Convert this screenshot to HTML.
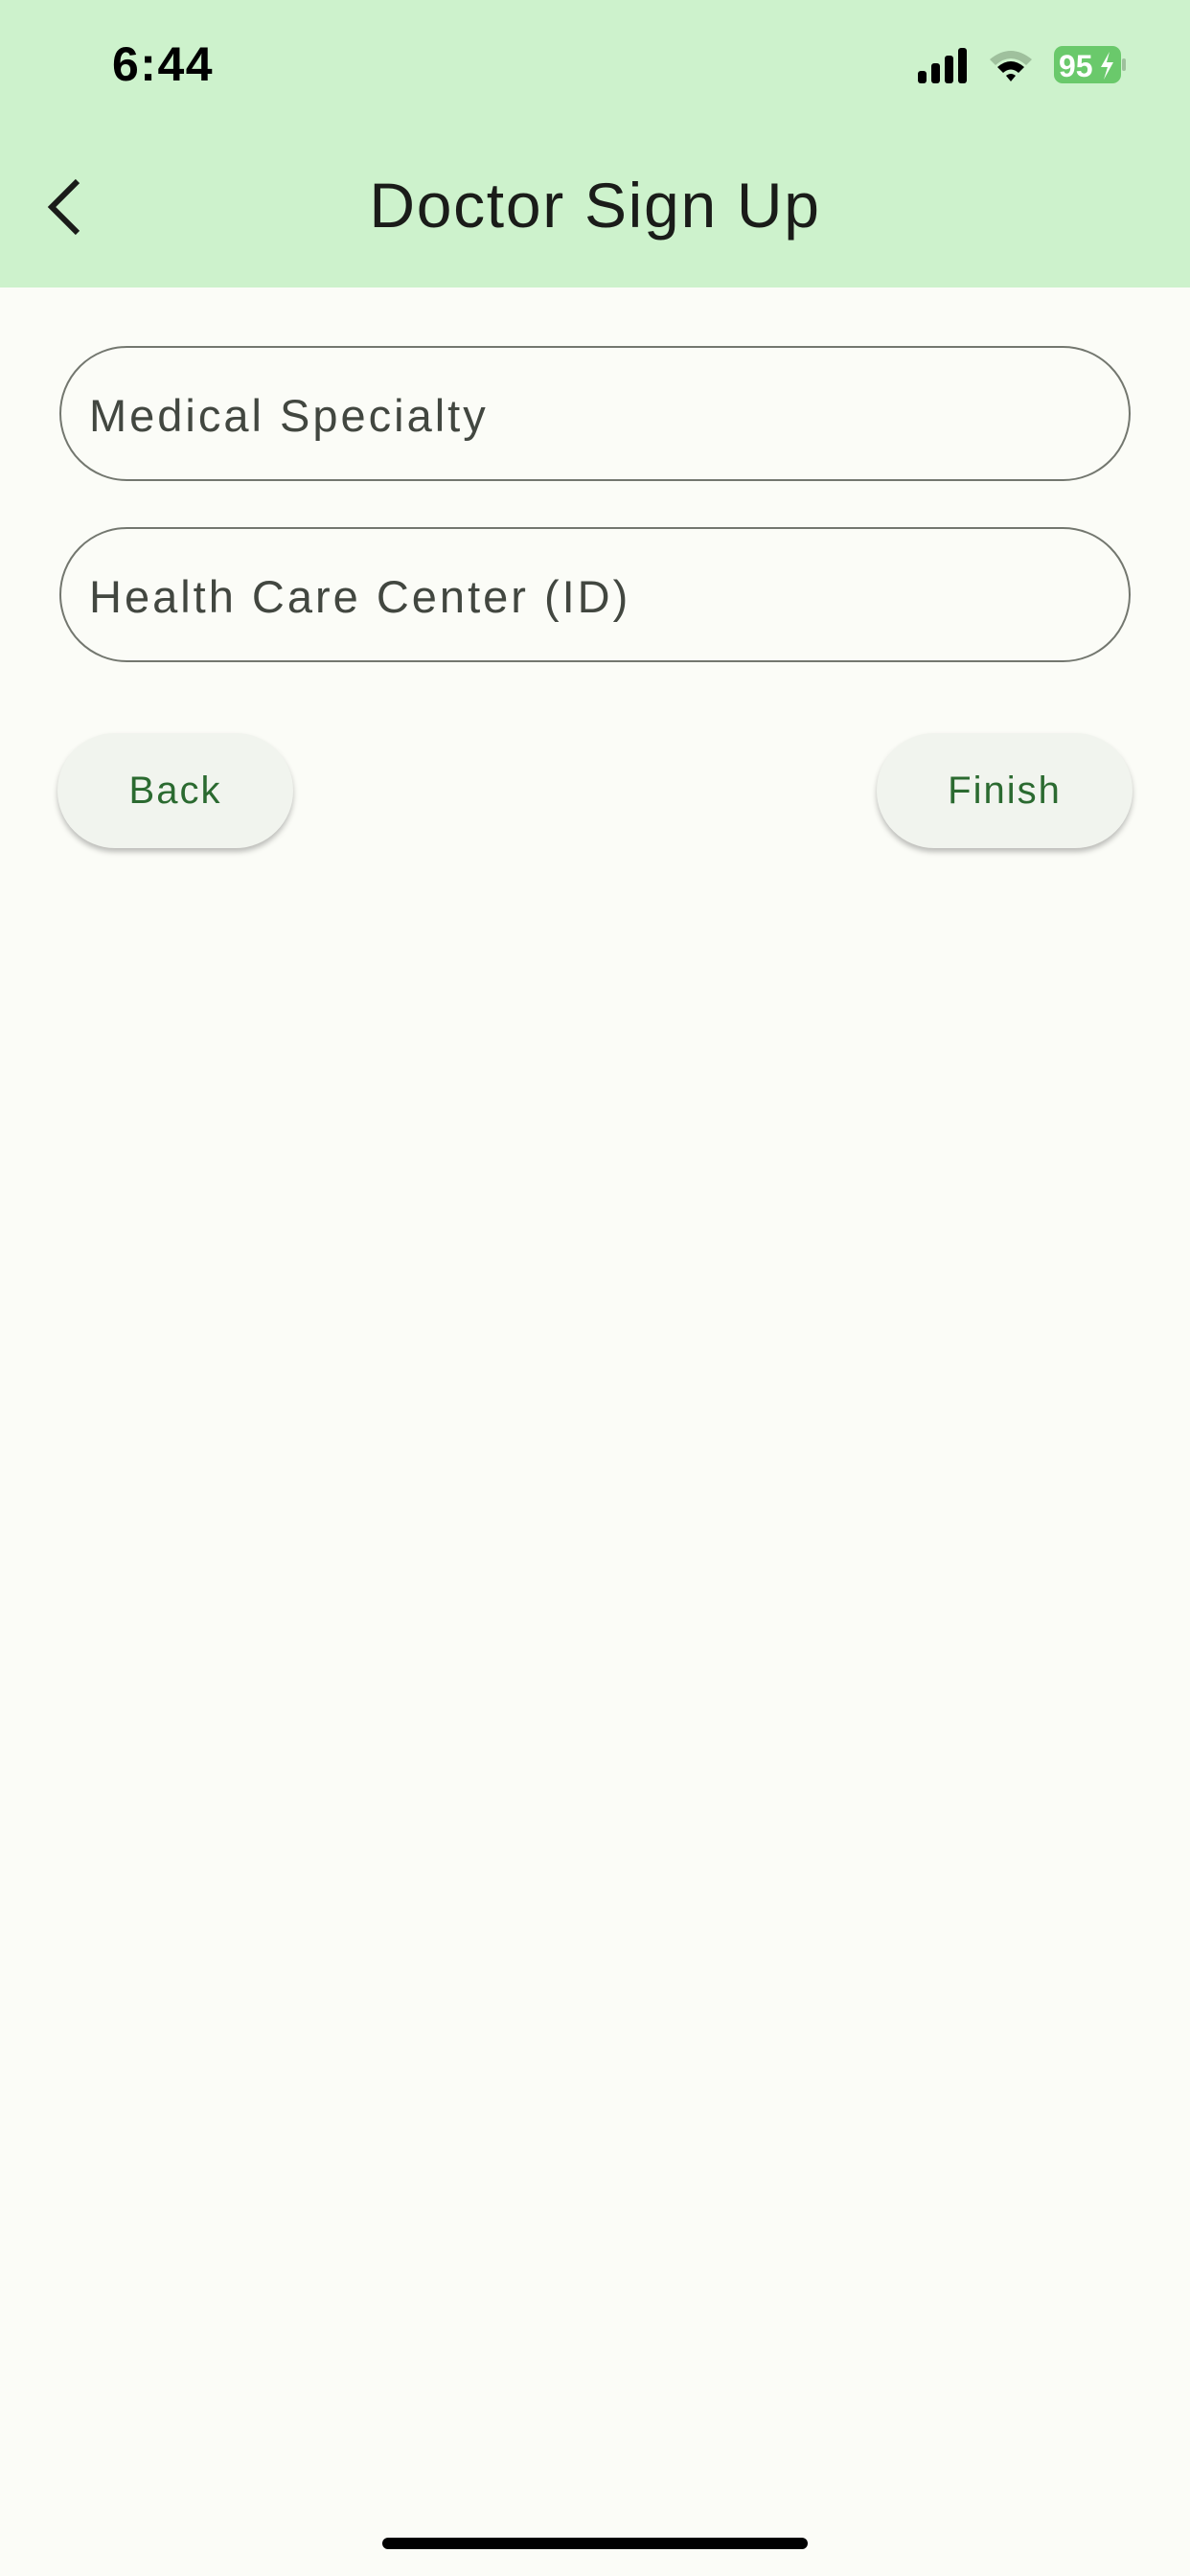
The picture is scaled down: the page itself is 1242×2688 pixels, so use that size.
<!DOCTYPE html>
<html><head><meta charset="utf-8"><style>
*{margin:0;padding:0;box-sizing:border-box}
body{width:1242px;height:2688px;background:#fbfcf7;font-family:"Liberation Sans",sans-serif;position:relative;overflow:hidden}
.hdr{position:absolute;left:0;top:0;width:1242px;height:300px;background:#cdf2cc}
.time{position:absolute;left:117px;top:38px;font-size:50px;font-weight:bold;color:#000;letter-spacing:1.5px}
.title{position:absolute;left:0;width:1242px;text-align:center;top:176px;font-size:66px;color:#1a1c19;letter-spacing:1.7px}
.field{position:absolute;left:62px;width:1118px;height:141px;border:2.5px solid #73776f;border-radius:71px}
.field span{position:absolute;left:29px;top:43px;font-size:47px;color:#424740;letter-spacing:3px}
.btn{position:absolute;top:765px;height:120px;border-radius:60px;background:#f1f4ee;box-shadow:0 4px 6px rgba(0,0,0,.25);color:#2b6a30;font-size:40px;display:flex;align-items:center;justify-content:center;letter-spacing:2px}
</style></head><body>
<div class="hdr">
<div class="time">6:44</div>
<svg style="position:absolute;left:955px;top:48px" width="220" height="42">
<rect x="3" y="26" width="9" height="13" rx="3" fill="#000"/>
<rect x="17" y="18" width="9" height="21" rx="3" fill="#000"/>
<rect x="31" y="10" width="9" height="29" rx="3" fill="#000"/>
<rect x="45" y="2" width="9" height="37" rx="3" fill="#000"/>
<path d="M78 14 Q100 -4 122 14 L116 20 Q100 6 84 20Z" fill="#9fc09d"/>
<path d="M86 22 Q100 10 114 22 L108 28 Q100 21 92 28Z" fill="#000"/>
<path d="M95 31 Q100 27 105 31 L100 37Z" fill="#000"/>
<rect x="145" y="0" width="70" height="39" rx="9" fill="#6ac96b"/>
<rect x="216" y="13" width="4" height="13" rx="2" fill="#9fc09d"/>
<text x="150" y="32" font-family="Liberation Sans" font-weight="bold" font-size="32" fill="#fff">95</text>
<path d="M203 6 L194 22 L201 22 L197 35 L207 17 L200 17Z" fill="#fff"/>
</svg>
<svg style="position:absolute;left:44px;top:185px" width="44" height="62"><path d="M37 4 L10 31 L37 58" stroke="#1a1c19" stroke-width="6" fill="none"/></svg>
<div class="title">Doctor Sign Up</div>
</div>
<div class="field" style="top:361px"><span>Medical Specialty</span></div>
<div class="field" style="top:550px"><span>Health Care Center (ID)</span></div>
<div class="btn" style="left:60px;width:246px">Back</div>
<div class="btn" style="left:915px;width:267px">Finish</div>
<div style="position:absolute;left:399px;top:2648px;width:444px;height:12px;border-radius:6px;background:#000"></div>
</body></html>
